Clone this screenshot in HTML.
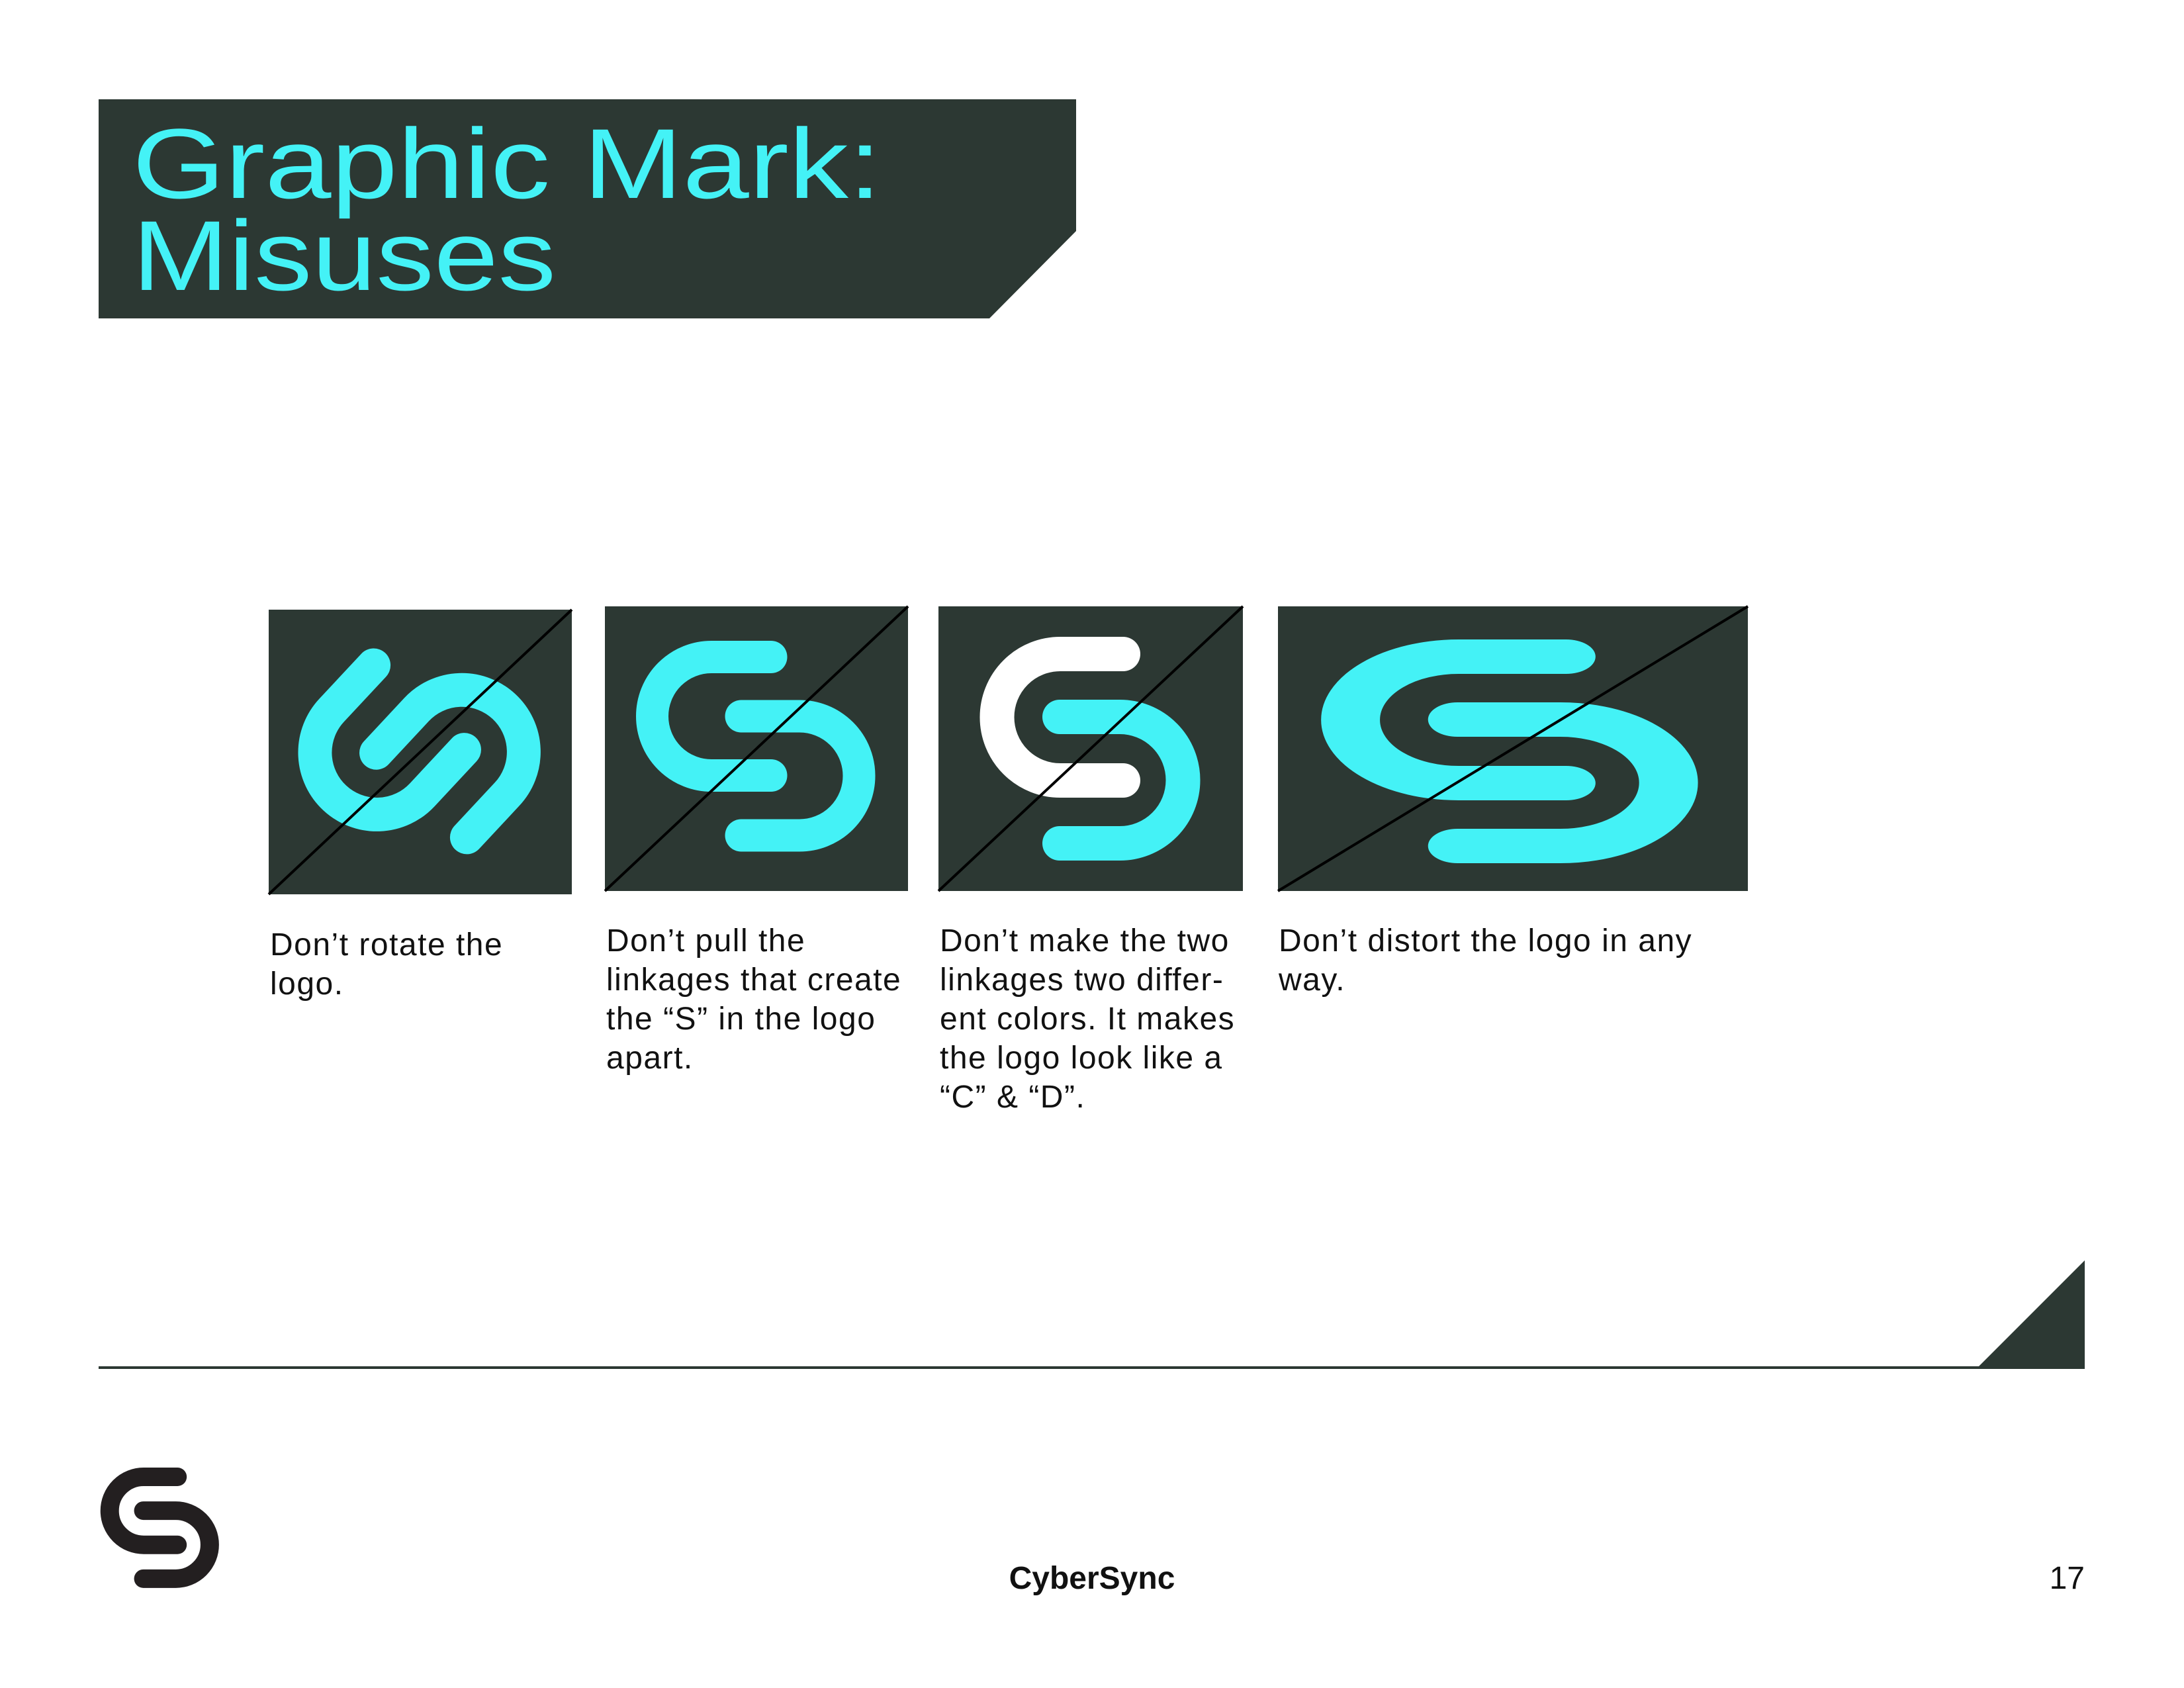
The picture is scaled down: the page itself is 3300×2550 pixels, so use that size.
<!DOCTYPE html>
<html><head><meta charset="utf-8"><style>
html,body{margin:0;padding:0;background:#fff}
svg{display:block}
</style></head><body>
<svg width="3300" height="2550" viewBox="0 0 3300 2550" xmlns="http://www.w3.org/2000/svg">
<defs>
<g id="lc"><path d="M1697 988 H1602 A95.5 95.5 0 0 0 1602 1179 H1697" fill="none" stroke-width="52" stroke-linecap="round"/></g>
<g id="ld"><path d="M1601 1083 H1692 A95.5 95.5 0 0 1 1692 1274 H1601" fill="none" stroke-width="52" stroke-linecap="round"/></g>
</defs>
<rect width="3300" height="2550" fill="#fff"/>
<polygon points="149,150 1626,150 1626,349 1495,481 149,481" fill="#2c3833"/>
<g font-family="Liberation Sans, sans-serif" font-size="150" fill="#44f2f6">
<text x="200" y="299" textLength="1132" lengthAdjust="spacingAndGlyphs">Graphic Mark:</text>
<text x="200" y="438" textLength="640" lengthAdjust="spacingAndGlyphs">Misuses</text>
</g>
<rect x="406" y="921" width="458" height="430" fill="#2c3833"/>
<rect x="914" y="916" width="458" height="430" fill="#2c3833"/>
<rect x="1418" y="916" width="460" height="430" fill="#2c3833"/>
<rect x="1931" y="916" width="710" height="430" fill="#2c3833"/>
<g transform="translate(634,1136) rotate(-47) scale(0.98) translate(-1647.5,-1131)" stroke="#44f2f6">
<use href="#lc"/><use href="#ld"/>
</g>
<g stroke="#44f2f6" fill="none" stroke-width="49" stroke-linecap="round">
<path d="M1165 992.5 H1075 A89.5 89.5 0 0 0 1075 1171.5 H1165"/>
<path d="M1120 1082 H1208 A90 90 0 0 1 1208 1262 H1120"/>
</g>
<g stroke="#ffffff"><use href="#lc"/></g>
<g stroke="#44f2f6"><use href="#ld"/></g>
<g transform="translate(1997,966) scale(1.71,1) translate(-1481,-962)" stroke="#44f2f6">
<use href="#lc"/><use href="#ld"/>
</g>
<g stroke="#000" stroke-width="4">
<line x1="406" y1="1351" x2="864" y2="921"/>
<line x1="914" y1="1346" x2="1372" y2="916"/>
<line x1="1418" y1="1346" x2="1878" y2="916"/>
<line x1="1931" y1="1346" x2="2641" y2="916"/>
</g>
<g font-family="Liberation Sans, sans-serif" font-size="48" fill="#111" letter-spacing="1.5">
<text x="408" y="1443">Don’t rotate the</text>
<text x="408" y="1502">logo.</text>
<text x="916" y="1437">Don’t pull the</text>
<text x="916" y="1496">linkages that create</text>
<text x="916" y="1555">the “S” in the logo</text>
<text x="916" y="1614">apart.</text>
<text x="1420" y="1437">Don’t make the two</text>
<text x="1420" y="1496">linkages two differ-</text>
<text x="1420" y="1555">ent colors. It makes</text>
<text x="1420" y="1614">the logo look like a</text>
<text x="1420" y="1673">“C” &amp; “D”.</text>
<text x="1932" y="1437">Don’t distort the logo in any</text>
<text x="1932" y="1496">way.</text>
</g>
<rect x="149" y="2064" width="3001" height="4" fill="#2c3833"/>
<polygon points="2988,2066 3150,1904 3150,2066" fill="#2c3833"/>
<g transform="translate(152,2217) scale(0.538) translate(-1481,-962)" stroke="#231f20">
<use href="#lc"/><use href="#ld"/>
</g>
<g font-family="Liberation Sans, sans-serif" font-size="48" fill="#111">
<text x="1650" y="2400" text-anchor="middle" font-weight="bold">CyberSync</text>
<text x="3150" y="2400" text-anchor="end">17</text>
</g>
</svg>
</body></html>
